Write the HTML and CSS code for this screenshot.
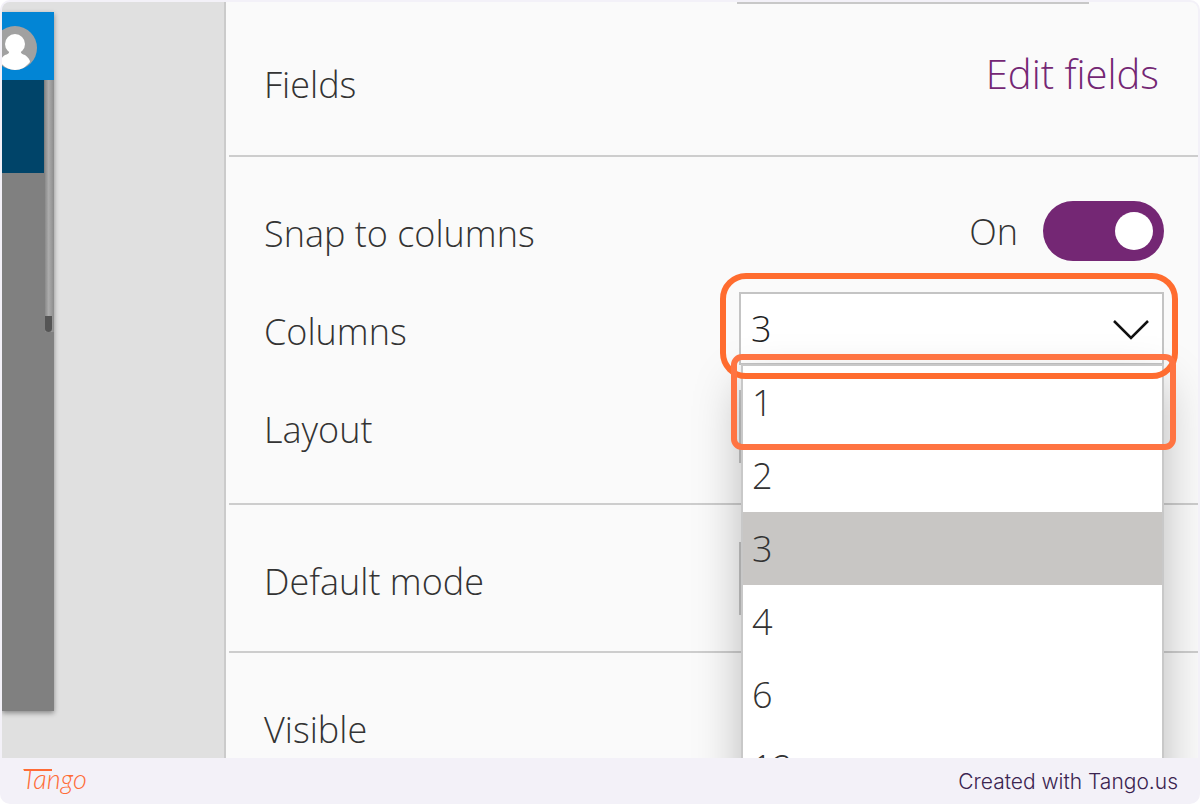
FILE: index.html
```html
<!DOCTYPE html>
<html lang="en">
<head>
    <meta charset="UTF-8">
    <meta name="viewport" content="width=device-width, initial-scale=1.0">
    <title>Form properties</title>
    <link rel="stylesheet" href="styles.css">
</head>
<body>

    <div class="frame">
        <main class="capture">

            <div class="canvas">
                <div class="app">
                    <div class="app-header">
                        <svg width="52" height="68" viewBox="0 0 52 68" aria-hidden="true">
                            <circle cx="13" cy="36" r="22" fill="#a1a1a1"/>
                            <circle cx="13" cy="32" r="10" fill="#fff"/>
                            <path d="M7 38h12c-1 3 1 4 4 5 3 2 5 5 5 7-4 5-9 8-15 8S2 55-2 50c0-2 2-5 5-7 3-1 5-2 4-5z" fill="#fff"/>
                        </svg>
                    </div>
                    <div class="app-body">
                        <div class="app-banner"></div>
                        <div class="app-track"><div class="app-thumb"></div></div>
                    </div>
                </div>
            </div>

            <form class="panel">
                <section class="section section-fields">
                    <div class="row">
                        <span class="label">Fields</span>
                        <a class="edit-link" href="#">Edit fields</a>
                    </div>
                </section>

                <section class="section section-columns">
                    <div class="row">
                        <label class="label" for="snap">Snap to columns</label>
                        <span class="state">On</span>
                        <input class="toggle" type="checkbox" role="switch" id="snap" checked>
                    </div>
                    <div class="row">
                        <label class="label" for="columns">Columns</label>
                        <div class="control open">
                            <select class="select" id="columns">
                                <option>1</option>
                                <option>2</option>
                                <option selected>3</option>
                                <option>4</option>
                                <option>6</option>
                                <option>12</option>
                            </select>
                            <svg class="chevron" width="36" height="22" viewBox="0 0 36 22" aria-hidden="true">
                                <path d="M1 2l17 17L35 2" fill="none" stroke="#111" stroke-width="2.5"/>
                            </svg>
                            <ul class="menu" role="listbox" aria-label="Columns">
                                <li class="option" role="option">1<span class="ring ring-option"></span></li>
                                <li class="option" role="option">2</li>
                                <li class="option selected" role="option" aria-selected="true">3</li>
                                <li class="option" role="option">4</li>
                                <li class="option" role="option">6</li>
                                <li class="option" role="option">12</li>
                            </ul>
                            <span class="ring ring-select"></span>
                        </div>
                    </div>
                    <div class="row">
                        <label class="label" for="layout">Layout</label>
                        <div class="control">
                            <select class="select" id="layout"></select>
                        </div>
                    </div>
                </section>

                <section class="section section-mode">
                    <div class="row">
                        <label class="label" for="mode">Default mode</label>
                        <div class="control">
                            <select class="select" id="mode"></select>
                        </div>
                    </div>
                </section>

                <section class="section">
                    <div class="row">
                        <span class="label">Visible</span>
                    </div>
                </section>
            </form>

        </main>

        <footer class="footer">
            <span class="logo">Tango</span>
            <span class="credit">Created with Tango.us</span>
        </footer>
    </div>

</body>
</html>
```
FILE: styles.css
```css
* {
    box-sizing: border-box;
}

body {
    margin: 0;
    background: #fff;
    font-family: "Open Sans", "Noto Sans", sans-serif;
    font-size: 36px;
    font-weight: 300;
    color: #333;
}

.frame {
    display: flex;
    flex-direction: column;
    height: 100vh;
    padding: 2px 2px 0;
    border-radius: 10px;
    background: #f3f1f8;
    overflow: hidden;
}

.capture {
    display: flex;
    flex: 1;
    min-height: 0;
    border-radius: 8px 8px 0 0;
    overflow: hidden;
}

/* app preview on the left */
.canvas {
    display: flex;
    flex: 0 0 224px;
    padding: 10px 0 47px;
    background: #e0e0e0;
    border-right: 2px solid #cbcbcb;
}

.app {
    display: flex;
    flex-direction: column;
    width: 52px;
    background: #808080;
    box-shadow: 0 2px 5px rgba(0, 0, 0, 0.4);
}

.app-header {
    height: 68px;
    background: #0285d5;
}

.app-header svg {
    display: block;
}

.app-body {
    display: flex;
    justify-content: space-between;
}

.app-banner {
    width: 42px;
    height: 93px;
    background: #004469;
}

.app-track {
    display: flex;
    flex-direction: column;
    justify-content: flex-end;
    width: 9px;
    height: 252px;
    background: linear-gradient(to right, #8a8a8a, #acacac 40%, #8c8c8c);
}

.app-thumb {
    height: 16px;
    margin-right: 2px;
    border-radius: 0 0 4px 4px;
    background: #555;
}

/* properties panel */
.panel {
    flex: 1;
    padding-left: 3px;
    background: #fafafa;
    overflow: hidden;
}

.panel::before {
    content: "";
    display: block;
    width: 352px;
    height: 2px;
    margin: 0 109px 0 auto;
    background: #c8c8c8;
}

.section {
    padding: 25px 34px;
    border-bottom: 2px solid #cdcdcd;
}

.section-fields {
    padding: 29px 34px 24px;
}

.section-columns {
    padding-bottom: 27px;
}

.section-mode {
    padding-bottom: 23px;
}

.row {
    display: flex;
    align-items: center;
    height: 98px;
}

.label {
    flex: 1;
    padding: 4px 0 0 1px;
}

.edit-link {
    padding: 0 5px 18px;
    font-size: 40px;
    color: #742774;
    text-decoration: none;
}

.state {
    margin-right: 25px;
}

.toggle {
    appearance: none;
    display: flex;
    align-items: center;
    justify-content: flex-end;
    width: 121px;
    height: 60px;
    margin: 0;
    padding: 0 11px;
    border-radius: 30px;
    background: #742774;
}

.toggle::before {
    content: "";
    width: 38px;
    height: 38px;
    border-radius: 50%;
    background: #fff;
}

.control {
    position: relative;
    width: 425px;
    padding-bottom: 2px;
}

.open {
    z-index: 1;
}

.select {
    appearance: none;
    display: block;
    width: 100%;
    height: 73px;
    padding: 0 10px;
    border: 2px solid #c4c4c4;
    border-radius: 0;
    background: #fff;
    font: inherit;
    color: #222;
}

.chevron {
    position: absolute;
    top: 27px;
    right: 15px;
}

.menu {
    position: absolute;
    top: 72px;
    left: 2px;
    right: 0;
    margin: 0;
    padding: 0;
    border: 2px solid #c8c8c8;
    background: #fff;
    box-shadow: 0 20px 44px rgba(0, 0, 0, 0.26);
    list-style: none;
}

.option {
    position: relative;
    height: 73px;
    padding: 0 9px;
    line-height: 73px;
}

.selected {
    background: #c8c6c4;
}

/* step highlights */
.ring {
    position: absolute;
    border: 6px solid #ff7442;
    pointer-events: none;
}

.ring-select {
    top: -19px;
    right: -14px;
    bottom: -12px;
    left: -19px;
    border-color: #ff6c2f;
    border-radius: 26px;
}

.ring-option {
    z-index: 1;
    top: -12px;
    right: -14px;
    bottom: -11px;
    left: -12px;
    border-radius: 11px;
}

.footer {
    display: flex;
    align-items: center;
    justify-content: space-between;
    height: 46px;
    padding: 0 20px;
    font-size: 21px;
}

.logo {
    position: relative;
    padding-bottom: 4px;
    font-family: "Lato", sans-serif;
    font-size: 27px;
    font-style: italic;
    line-height: 32px;
    color: #ff6c37;
}

/* long bar over the wordmark */
.logo::before {
    content: "";
    position: absolute;
    top: 6px;
    left: 2px;
    width: 28px;
    height: 2px;
    background: #ff6c37;
}

.credit {
    font-family: "Inter", sans-serif;
    color: #3b2450;
}
```
